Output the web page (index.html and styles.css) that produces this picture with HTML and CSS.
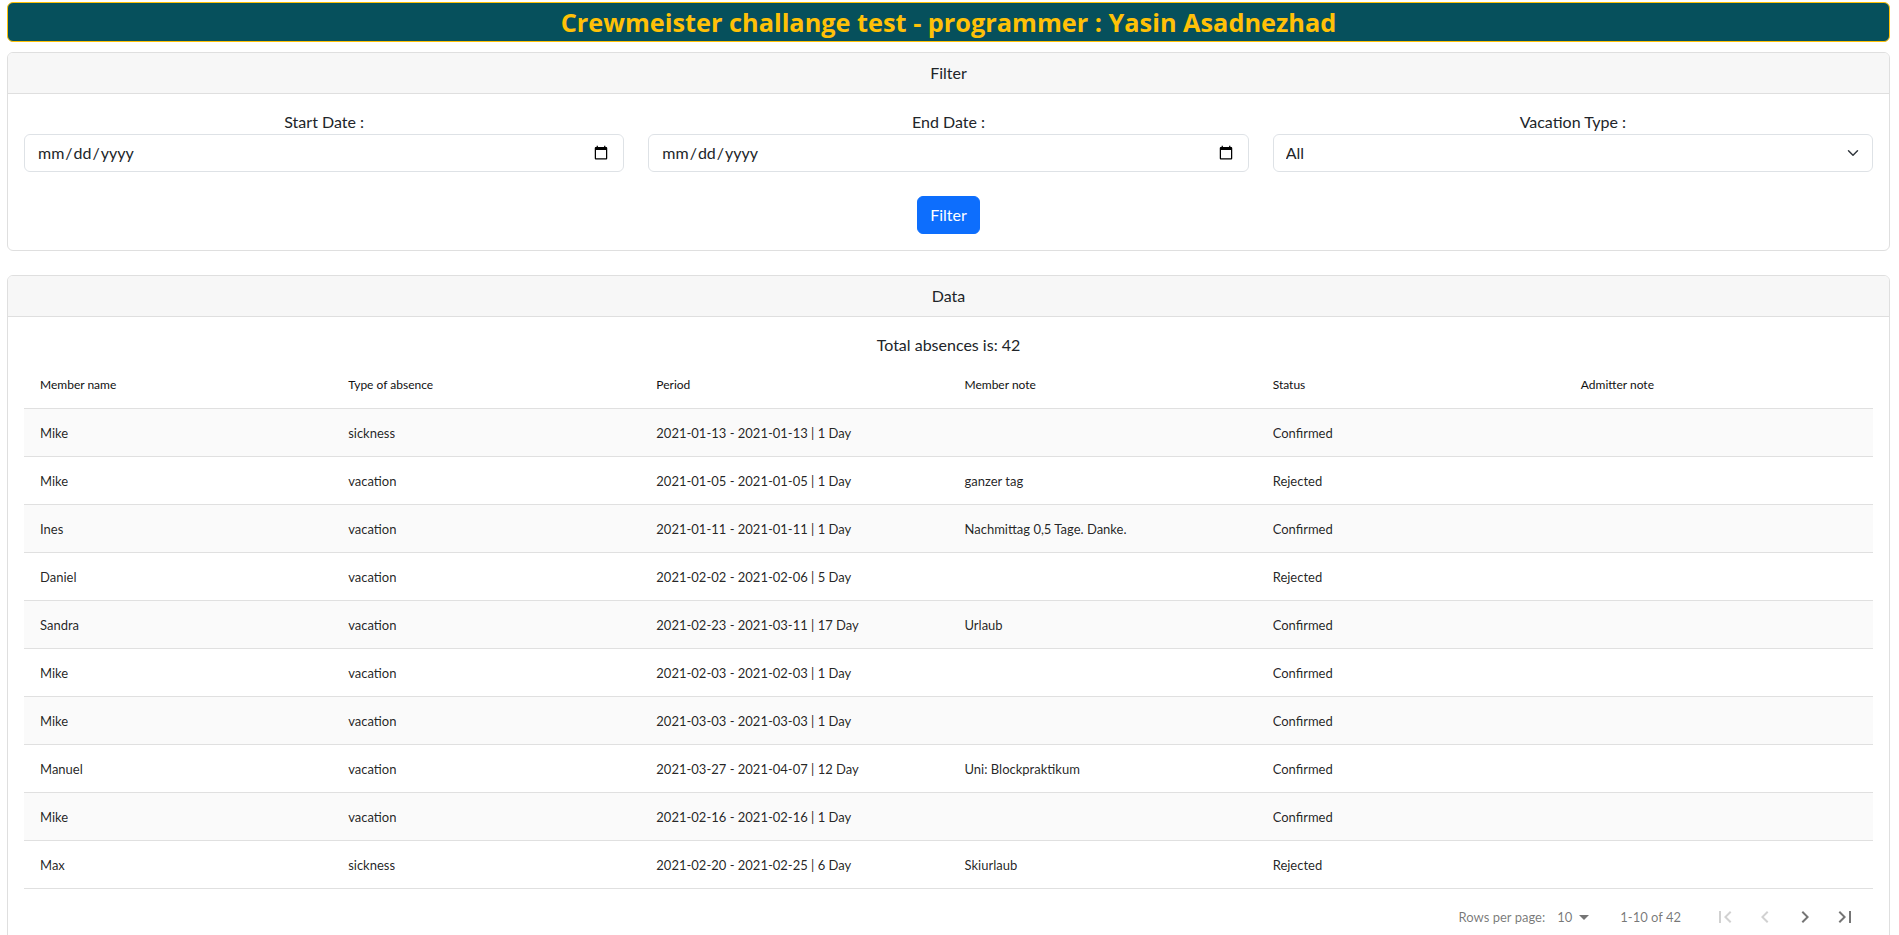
FILE: index.html
```html
<!DOCTYPE html>
<html lang="en">
<head>
<meta charset="utf-8">
<title>Crewmeister challange test</title>
<link rel="stylesheet" href="styles.css">
</head>
<body>
<div class="page">
  <header class="title-bar">
    <h1 class="title">Crewmeister challange test - programmer : Yasin Asadnezhad</h1>
  </header>

  <section class="card">
    <div class="card-header">Filter</div>
    <div class="card-body">
      <div class="filter-grid">
        <div class="field">
          <label class="field-label">Start Date :</label>
          <input class="control" type="date">
        </div>
        <div class="field">
          <label class="field-label">End Date :</label>
          <input class="control" type="date">
        </div>
        <div class="field">
          <label class="field-label">Vacation Type :</label>
          <div class="select-wrap">
            <select class="control select">
              <option>All</option>
              <option>vacation</option>
              <option>sickness</option>
            </select>
            <svg class="chevron" width="16" height="12" viewBox="0 0 16 16"><path d="m2 5 6 6 6-6" fill="none" stroke="#343a40" stroke-linecap="round" stroke-linejoin="round" stroke-width="2"/></svg>
          </div>
        </div>
      </div>
      <div class="actions">
        <button class="btn-primary" type="button">Filter</button>
      </div>
    </div>
  </section>

  <section class="card card-data">
    <div class="card-header">Data</div>
    <div class="card-body data-body">
      <div class="total">Total absences is: 42</div>
      <div class="table">
        <div class="thead">
          <div class="th">Member name</div>
          <div class="th">Type of absence</div>
          <div class="th">Period</div>
          <div class="th">Member note</div>
          <div class="th">Status</div>
          <div class="th">Admitter note</div>
        </div>
        <div class="tbody">
          <div class="tr"><div class="td">Mike</div><div class="td">sickness</div><div class="td">2021-01-13 - 2021-01-13 | 1 Day</div><div class="td"></div><div class="td">Confirmed</div><div class="td"></div></div>
          <div class="tr"><div class="td">Mike</div><div class="td">vacation</div><div class="td">2021-01-05 - 2021-01-05 | 1 Day</div><div class="td">ganzer tag</div><div class="td">Rejected</div><div class="td"></div></div>
          <div class="tr"><div class="td">Ines</div><div class="td">vacation</div><div class="td">2021-01-11 - 2021-01-11 | 1 Day</div><div class="td">Nachmittag 0,5 Tage. Danke.</div><div class="td">Confirmed</div><div class="td"></div></div>
          <div class="tr"><div class="td">Daniel</div><div class="td">vacation</div><div class="td">2021-02-02 - 2021-02-06 | 5 Day</div><div class="td"></div><div class="td">Rejected</div><div class="td"></div></div>
          <div class="tr"><div class="td">Sandra</div><div class="td">vacation</div><div class="td">2021-02-23 - 2021-03-11 | 17 Day</div><div class="td">Urlaub</div><div class="td">Confirmed</div><div class="td"></div></div>
          <div class="tr"><div class="td">Mike</div><div class="td">vacation</div><div class="td">2021-02-03 - 2021-02-03 | 1 Day</div><div class="td"></div><div class="td">Confirmed</div><div class="td"></div></div>
          <div class="tr"><div class="td">Mike</div><div class="td">vacation</div><div class="td">2021-03-03 - 2021-03-03 | 1 Day</div><div class="td"></div><div class="td">Confirmed</div><div class="td"></div></div>
          <div class="tr"><div class="td">Manuel</div><div class="td">vacation</div><div class="td">2021-03-27 - 2021-04-07 | 12 Day</div><div class="td">Uni: Blockpraktikum</div><div class="td">Confirmed</div><div class="td"></div></div>
          <div class="tr"><div class="td">Mike</div><div class="td">vacation</div><div class="td">2021-02-16 - 2021-02-16 | 1 Day</div><div class="td"></div><div class="td">Confirmed</div><div class="td"></div></div>
          <div class="tr"><div class="td">Max</div><div class="td">sickness</div><div class="td">2021-02-20 - 2021-02-25 | 6 Day</div><div class="td">Skiurlaub</div><div class="td">Rejected</div><div class="td"></div></div>
        </div>
        <nav class="pagination">
          <span class="rows-label">Rows per page:</span>
          <span class="rows-select">10<svg class="dd" width="24" height="24" viewBox="0 0 24 24"><path d="M7 10l5 5 5-5z"/></svg></span>
          <span class="range">1-10 of 42</span>
          <div class="page-list">
            <button class="page-btn disabled" type="button" aria-label="First Page"><svg width="24" height="24" viewBox="0 0 24 24"><path d="M18.41 16.59L13.82 12l4.59-4.59L17 6l-6 6 6 6zM6 6h2v12H6z"/></svg></button>
            <button class="page-btn disabled" type="button" aria-label="Previous Page"><svg width="24" height="24" viewBox="0 0 24 24"><path d="M15.41 7.41L14 6l-6 6 6 6 1.41-1.41L10.83 12z"/></svg></button>
            <button class="page-btn" type="button" aria-label="Next Page"><svg width="24" height="24" viewBox="0 0 24 24"><path d="M10 6L8.59 7.41 13.17 12l-4.58 4.59L10 18l6-6z"/></svg></button>
            <button class="page-btn" type="button" aria-label="Last Page"><svg width="24" height="24" viewBox="0 0 24 24"><path d="M5.59 7.41L10.18 12l-4.59 4.59L7 18l6-6-6-6zM16 6h2v12h-2z"/></svg></button>
          </div>
        </nav>
      </div>
    </div>
  </section>
</div>
</body>
</html>
```
FILE: styles.css
```css
* { box-sizing: border-box; }

body {
  margin: 0;
  font-family: "Lato", "Roboto", sans-serif;
  font-size: 16px;
  line-height: 24px;
  color: #212529;
  background: #fff;
}

.page {
  padding: 2px 9px 0 7px;
}

.title-bar {
  height: 40px;
  background: #06505c;
  border: 1px solid #ffc107;
  border-radius: 6px;
  display: flex;
  align-items: center;
  justify-content: center;
}

.title {
  margin: 0;
  font-family: "Open Sans", "Noto Sans", sans-serif;
  font-weight: 700;
  font-size: 25.3px;
  line-height: 34px;
  color: #ffc107;
  white-space: nowrap;
}

.card {
  margin-top: 10px;
  border: 1px solid #dfdfdf;
  border-radius: 6px;
  background: #fff;
  overflow: hidden;
}

.card-data {
  margin-top: 24px;
}

.card-header {
  height: 41px;
  padding: 8px 16px;
  background: #f7f7f7;
  border-bottom: 1px solid #dfdfdf;
  text-align: center;
}

.card-body {
  padding: 16px;
}

.filter-grid {
  display: grid;
  grid-template-columns: repeat(3, 1fr);
  column-gap: 24px;
}

.field {
  display: flex;
  flex-direction: column;
}

.field-label {
  display: block;
  text-align: center;
}

.control {
  display: block;
  width: 100%;
  height: 38px;
  padding: 6px 12px;
  font-family: inherit;
  font-size: 16px;
  line-height: 24px;
  color: #212529;
  background: #fff;
  border: 1px solid #dee2e6;
  border-radius: 6px;
  outline: none;
}

.select-wrap {
  position: relative;
}

.select {
  appearance: none;
  -webkit-appearance: none;
  padding-right: 36px;
}

.chevron {
  position: absolute;
  right: 12px;
  top: 13px;
  pointer-events: none;
}

.actions {
  display: flex;
  justify-content: center;
  margin-top: 24px;
}

.btn-primary {
  height: 38px;
  padding: 6px 12px;
  font-family: inherit;
  font-size: 16px;
  line-height: 24px;
  color: #fff;
  background: #0d6efd;
  border: 1px solid #0d6efd;
  border-radius: 6px;
}

.data-body {
  padding-bottom: 0;
}

.total {
  text-align: center;
  line-height: 23px;
}

.table {
  font-size: 13px;
  color: rgba(0, 0, 0, 0.87);
}

.thead,
.tr {
  display: grid;
  grid-template-columns: repeat(6, 1fr);
  align-items: center;
}

.thead {
  height: 53px;
  padding-top: 5px;
  border-bottom: 1px solid #e0e0e0;
  font-size: 12px;
  color: #111;
}

.th,
.td {
  padding: 0 16px;
  white-space: nowrap;
  overflow: hidden;
}

.tr {
  height: 48px;
  border-bottom: 1px solid #e0e0e0;
  background: #fff;
}

.tr:nth-child(odd) {
  background: #fafafa;
}

.tr:last-child {
  border-bottom: none;
  height: 47px;
}

.pagination {
  display: flex;
  justify-content: flex-end;
  align-items: center;
  min-height: 56px;
  padding: 0 8px;
  border-top: 1px solid #e0e0e0;
  font-size: 13px;
  color: rgba(0, 0, 0, 0.54);
}

.rows-label {
  margin: 0 4px;
}

.rows-select {
  position: relative;
  padding: 0 24px 0 8px;
  height: 24px;
  line-height: 24px;
}

.dd {
  position: absolute;
  right: 0;
  top: 0;
  fill: rgba(0, 0, 0, 0.54);
}

.range {
  margin: 0 24px;
}

.page-list {
  display: flex;
}

.page-btn {
  width: 40px;
  height: 40px;
  padding: 8px;
  margin: 0;
  border: none;
  border-radius: 50%;
  background: transparent;
  fill: rgba(0, 0, 0, 0.54);
}

.page-btn svg {
  display: block;
}

.page-btn.disabled {
  fill: rgba(0, 0, 0, 0.18);
}
```
